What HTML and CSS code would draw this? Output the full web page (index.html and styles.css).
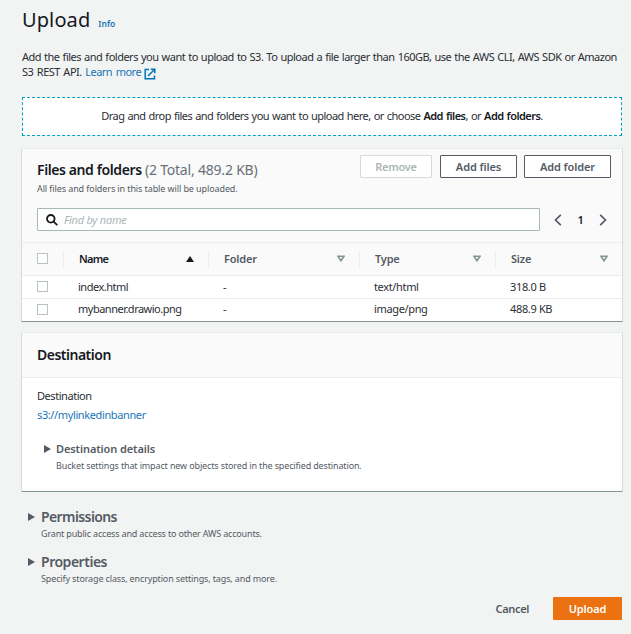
FILE: index.html
```html
<!DOCTYPE html>
<html lang="en">
<head>
<meta charset="utf-8">
<title>Upload</title>
<link rel="stylesheet" href="styles.css">
</head>
<body>
<main class="page">
  <header class="title"><h1>Upload</h1><a class="info">Info</a></header>
  <p class="intro"><span class="l1">Add the files and folders you want to upload to S3. To upload a file larger than 160GB, use the AWS CLI, AWS SDK or Amazon</span><br><span class="l2">S3 REST API. <a>Learn more</a></span><svg class="ext" width="12" height="12" viewBox="0 0 12 12" fill="none" stroke="#0073bb" stroke-width="1.5"><path d="M5 1.5H1.2V10.8H10.5V7.5M4 8L10.5 1.5M6.8 1.2H10.8V5.2"/></svg></p>
  <section class="drop"><span>Drag and drop files and folders you want to upload here, or choose <b>Add files</b>, or <b>Add folders</b>.</span></section>

  <section class="panel files">
    <div class="files-head">
      <div class="head-row">
        <div class="head-text">
          <h2><b>Files and folders</b> <span>(2 Total, 489.2 KB)</span></h2>
          <p class="small s-all">All files and folders in this table will be uploaded.</p>
        </div>
        <div class="buttons">
          <button class="btn remove" disabled>Remove</button>
          <button class="btn add-files">Add files</button>
          <button class="btn add-folder">Add folder</button>
        </div>
      </div>
      <div class="tools">
        <div class="search">
          <svg width="12" height="12" viewBox="0 0 12 12" fill="none" stroke="#16191f" stroke-width="1.8"><circle cx="4.8" cy="4.8" r="3.8"/><path d="M7.6 7.6L11.3 11.2"/></svg>
          <span>Find by name</span>
        </div>
        <div class="pager">
          <svg width="8" height="12" viewBox="0 0 8 12" fill="none" stroke="#545b64" stroke-width="1.7"><path d="M6.8 .8L1.5 6L6.8 11.2"/></svg>
          <b>1</b>
          <svg width="8" height="12" viewBox="0 0 8 12" fill="none" stroke="#545b64" stroke-width="1.7"><path d="M1.2 .8L6.5 6L1.2 11.2"/></svg>
        </div>
      </div>
    </div>
    <div class="row thead">
      <div class="check"><i></i></div>
      <div class="cell active"><span>Name</span><svg width="8" height="6" viewBox="0 0 8 6"><path d="M4 0L8 6H0Z" fill="#16191f"/></svg></div>
      <div class="cell"><span>Folder</span><svg width="8" height="7" viewBox="0 0 8 7"><path d="M1 1.2H7L4 5.8Z" fill="none" stroke="#879596" stroke-width="1.6"/></svg></div>
      <div class="cell"><span>Type</span><svg width="8" height="7" viewBox="0 0 8 7"><path d="M1 1.2H7L4 5.8Z" fill="none" stroke="#879596" stroke-width="1.6"/></svg></div>
      <div class="cell"><span>Size</span><svg width="8" height="7" viewBox="0 0 8 7"><path d="M1 1.2H7L4 5.8Z" fill="none" stroke="#879596" stroke-width="1.6"/></svg></div>
    </div>
    <div class="row">
      <div class="check"><i></i></div><div class="cell name">index.html</div><div class="cell">-</div><div class="cell">text/html</div><div class="cell">318.0 B</div>
    </div>
    <div class="row last">
      <div class="check"><i></i></div><div class="cell name">mybanner.drawio.png</div><div class="cell">-</div><div class="cell">image/png</div><div class="cell">488.9 KB</div>
    </div>
  </section>

  <section class="panel dest">
    <h2 class="dest-head">Destination</h2>
    <div class="dest-body">
      <p class="dest-label">Destination</p>
      <a class="dest-link">s3://mylinkedinbanner</a>
      <div class="expand details">
        <svg width="7" height="8" viewBox="0 0 7 8"><path d="M0 0L7 4L0 8Z" fill="#545b64"/></svg>
        <div><h3>Destination details</h3><p class="small s-bucket">Bucket settings that impact new objects stored in the specified destination.</p></div>
      </div>
    </div>
  </section>

  <section class="expand perms">
    <svg width="7" height="8" viewBox="0 0 7 8"><path d="M0 0L7 4L0 8Z" fill="#545b64"/></svg>
    <div><h2>Permissions</h2><p class="small s-grant">Grant public access and access to other AWS accounts.</p></div>
  </section>
  <section class="expand props">
    <svg width="7" height="8" viewBox="0 0 7 8"><path d="M0 0L7 4L0 8Z" fill="#545b64"/></svg>
    <div><h2>Properties</h2><p class="small s-specify">Specify storage class, encryption settings, tags, and more.</p></div>
  </section>
  <footer class="actions"><button class="cancel">Cancel</button><button class="upload">Upload</button></footer>
</main>
</body>
</html>
```
FILE: styles.css
```css
* { box-sizing: border-box; margin: 0; padding: 0; }
body { background: #f2f3f3; color: #2b2e34; font: 11px/15px "Noto Sans", "Open Sans", sans-serif; letter-spacing: -.35px; }
button { font: inherit; letter-spacing: inherit; }
b, h2, h3 { font-weight: 600; color: #16191f; }
a { color: #1a76b8; }
svg { display: block; flex: none; }
.page { width: 600px; height: 634px; margin-left: 22px; display: flex; flex-direction: column; }
.title { height: 49px; padding-top: 6px; display: flex; align-items: baseline; gap: 8px; }
h1 { font-size: 20px; line-height: 28px; font-weight: 400; letter-spacing: .1px; color: #16191f; }
.info { font-size: 8.5px; font-weight: 600; letter-spacing: 0; }
.intro { height: 48px; white-space: nowrap; }
.l1 { letter-spacing: -.5px; word-spacing: .68px; }
.l2 { letter-spacing: -.5px; word-spacing: 1.1px; }
.ext { display: inline-block; margin-left: 3px; vertical-align: -4px; }
.drop { height: 39px; padding-bottom: 2px; border: 1px dashed #00a1c9; background: #fff; display: flex; align-items: center; justify-content: center; white-space: nowrap; letter-spacing: -.54px; word-spacing: .7px; }
.panel { margin: 0 -1px; background: #fff; border: 1px solid #d5dbdb; border-top-color: #eaeded; border-bottom-color: #879596; }
.files { margin-top: 12px; height: 174px; }
.files-head { height: 93px; background: #fafafa; padding: 6px 11px 0 15px; }
.head-row { height: 53px; display: flex; justify-content: space-between; white-space: nowrap; }
.head-text { padding-top: 6px; }
h2 { font-size: 14px; line-height: 18px; letter-spacing: -.5px; }
.head-text h2 { letter-spacing: -.4px; }
.head-text h2 span { font-weight: 400; color: #687078; letter-spacing: -.2px; }
.small { font-size: 9px; line-height: 12px; letter-spacing: -.1px; color: #545b64; }
.head-text .small { margin-top: 4px; }
.buttons { display: flex; gap: 8px; }
.btn { height: 23px; background: #fff; border: 1px solid #545b64; border-radius: 1px; color: #545b64; font-weight: 600; letter-spacing: -.1px; padding-bottom: 1px; }
.remove { width: 72px; border-color: #d5dbdb; color: #aab7b8; letter-spacing: -.25px; }
.add-files { width: 77px; }
.add-folder { width: 87px; margin-left: -1px; }
.tools { display: flex; height: 23px; }
.search { width: 503px; background: #fff; border: 1px solid #aab7b8; border-radius: 1px; display: flex; align-items: center; padding-left: 8px; gap: 6px; color: #aab7b8; font-style: italic; }
.search span { padding-bottom: 1px; letter-spacing: -.25px; }
.pager { flex: 1; display: flex; align-items: center; justify-content: space-between; padding: 0 4px 0 14px; }
.pager b { padding-bottom: 1px; }
.row { display: grid; grid-template-columns: 41px 145px 151px 136px 1fr; height: 23px; border-top: 1px solid #eaeded; align-items: center; }
.thead { height: 33px; background: #fafafa; color: #545b64; font-weight: 600; letter-spacing: -.2px; }
.check { padding: 0 0 1px 15px; }
.check i { display: block; width: 11px; height: 11px; border: 1px solid #b8c3c4; background: #fff; }
.cell { padding: 0 0 1px 15px; white-space: nowrap; }
.last .cell { padding-bottom: 3px; }
.name { letter-spacing: -.5px; }
.thead .cell { height: 16px; border-left: 1px solid #eaeded; display: flex; align-items: center; justify-content: space-between; padding-right: 14px; }
.thead .active { color: #16191f; letter-spacing: -.7px; }
.dest { margin-top: 10px; height: 160px; }
.dest-head { height: 45px; padding: 13px 15px 0; background: #fafafa; border-bottom: 1px solid #eaeded; }
.dest-body { padding: 10px 15px; }
.dest-label { letter-spacing: -.45px; }
.dest-link { display: block; margin-top: 4px; letter-spacing: -.38px; }
.expand { display: flex; }
.details { margin: 19px 0 0 7px; gap: 5px; }
.expand > svg { margin-top: 4px; }
h3 { font-size: 11px; line-height: 15px; letter-spacing: -.1px; color: #545b64; }
.details .small { margin-top: 4px; }
.s-bucket, .s-specify { letter-spacing: -.14px; }
.s-grant { letter-spacing: -.17px; }
.perms, .props { height: 45px; padding-left: 6px; gap: 6px; }
.perms { margin-top: 16px; }
.perms h2, .props h2 { color: #545b64; letter-spacing: -.6px; }
.props h2 { letter-spacing: -.48px; }
.perms > svg, .props > svg { margin-top: 5px; }
.perms .small, .props .small { margin-top: 2px; }
.actions { display: flex; justify-content: flex-end; margin-top: -1px; align-items: center; gap: 24px; }
.actions button { border: 0; background: none; font-weight: 600; color: #545b64; letter-spacing: -.35px; padding-bottom: 1px; }
.actions .upload { width: 69px; height: 23px; background: #ec7211; color: #fff; border-radius: 1px; letter-spacing: -.1px; }
```
